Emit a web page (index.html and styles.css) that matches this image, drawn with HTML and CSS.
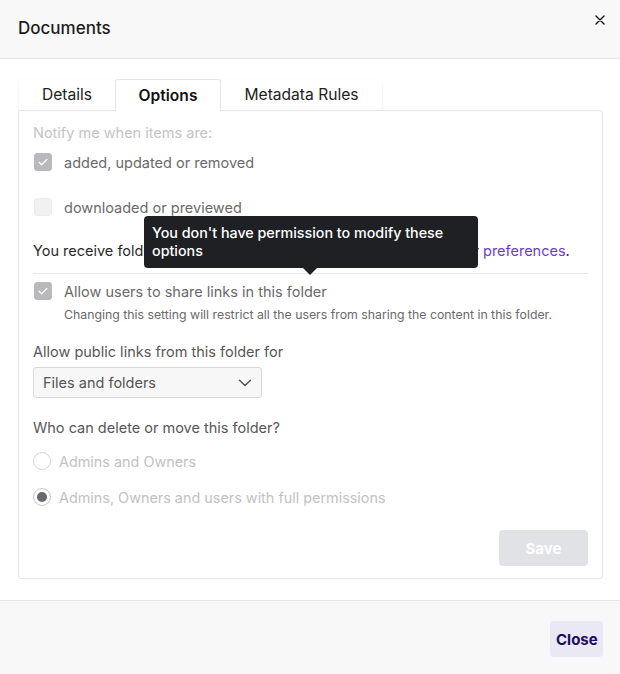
FILE: index.html
```html
<!DOCTYPE html>
<html>
<head>
<meta charset="utf-8">
<link rel="stylesheet" href="styles.css">
</head>
<body>
<div class="dialog">
  <header class="header">
    <h1 class="title">Documents</h1>
    <button class="x-btn" aria-label="Close">
      <svg width="10" height="10" viewBox="0 0 10 10"><path d="M1 1L9 9M9 1L1 9" stroke="#111" stroke-width="1.4" stroke-linecap="round"/></svg>
    </button>
  </header>
  <main class="body">
    <div class="tabs">
      <div class="tab">Details</div>
      <div class="tab active">Options</div>
      <div class="tab">Metadata Rules</div>
    </div>
    <section class="panel">
      <div class="faint-label">Notify me when items are:</div>
      <div class="check-row r1">
        <span class="cb checked"><svg width="12" height="10" viewBox="0 0 12 10"><path d="M2 5.2L4.6 7.8L10 2.4" fill="none" stroke="#fff" stroke-width="1.3" stroke-linecap="round" stroke-linejoin="round"/></svg></span>
        <span class="cb-label">added, updated or removed</span>
      </div>
      <div class="check-row r2">
        <span class="cb"></span>
        <span class="cb-label">downloaded or previewed</span>
      </div>
      <p class="receive">You receive folder notifications according to your settings in your <a class="link">preferences</a>.</p>
      <hr class="divider">
      <div class="check-row r3">
        <span class="cb checked"><svg width="12" height="10" viewBox="0 0 12 10"><path d="M2 5.2L4.6 7.8L10 2.4" fill="none" stroke="#fff" stroke-width="1.3" stroke-linecap="round" stroke-linejoin="round"/></svg></span>
        <span class="cb-label">Allow users to share links in this folder</span>
      </div>
      <p class="hint">Changing this setting will restrict all the users from sharing the content in this folder.</p>
      <div class="field-label public">Allow public links from this folder for</div>
      <div class="select">
        <span>Files and folders</span>
        <svg width="14" height="8" viewBox="0 0 14 8"><path d="M1.5 1.2L7 6.5L12.5 1.2" fill="none" stroke="#555" stroke-width="1.5" stroke-linecap="round" stroke-linejoin="round"/></svg>
      </div>
      <div class="field-label who">Who can delete or move this folder?</div>
      <div class="radio-row rr1">
        <span class="radio"></span>
        <span class="radio-label">Admins and Owners</span>
      </div>
      <div class="radio-row rr2">
        <span class="radio on"><span class="dot"></span></span>
        <span class="radio-label">Admins, Owners and users with full permissions</span>
      </div>
      <div class="actions">
        <button class="save">Save</button>
      </div>
    </section>
    <div class="tooltip">You don't have permission to modify these options<span class="arrow"></span></div>
  </main>
  <footer class="footer">
    <button class="close">Close</button>
  </footer>
</div>
</body>
</html>
```

FILE: styles.css
```css
* { box-sizing: border-box; }
html, body { margin: 0; padding: 0; }
body {
  width: 620px;
  height: 674px;
  font-family: Inter, "Noto Sans", "Liberation Sans", sans-serif;
  color: #222;
  background: #fff;
  overflow: hidden;
}
.dialog { display: flex; flex-direction: column; height: 674px; }
.header {
  height: 59px;
  background: #f8f8f8;
  border-bottom: 1px solid #e6e6e6;
  display: flex;
  align-items: flex-start;
  justify-content: space-between;
  padding: 0 15px 0 18px;
}
.title {
  margin: 0;
  font-size: 17px;
  font-weight: 500;
  line-height: 20px;
  padding-top: 18px;
  color: #1d1d1f;
}
.x-btn {
  border: 0;
  background: none;
  padding: 0;
  margin-top: 15px;
  width: 10px;
  height: 10px;
  display: flex;
}
.body {
  position: relative;
  flex: 1;
  padding: 21px 17px 0 18px;
}
.tabs {
  display: flex;
  height: 30px;
  padding-left: 1px;
}
.tab {
  height: 30px;
  line-height: 30px;
  font-size: 15.6px;
  color: #222;
  text-align: center;
  background: #fff;
  box-shadow: 0 1px 3px rgba(0,0,0,0.10);
  border-radius: 3px 3px 0 0;
}
.tab:nth-child(1) { width: 96px; }
.tab:nth-child(3) { width: 161px; border-radius: 3px 3px 3px 0; }
.tab.active {
  width: 106px;
  height: 32px;
  margin-top: -1px;
  font-weight: 600;
  color: #111;
  border: 1px solid #e6e6e6;
  border-bottom: 0;
  box-shadow: none;
  position: relative;
  z-index: 2;
  line-height: 31px;
}
.panel {
  border: 1px solid #e6e6e6;
  border-radius: 0 3px 3px 3px;
  padding: 11px 14px 12px 14px;
  height: 469px;
  position: relative;
  z-index: 1;
  background: #fff;
}
.faint-label {
  font-size: 14.5px;
  line-height: 22px;
  color: #c4c4c4;
}
.check-row {
  display: flex;
  align-items: center;
  height: 18px;
  padding-left: 1px;
}
.r1 { margin-top: 9px; }
.r2 { margin-top: 27px; }
.r3 { margin-top: 8px; }
.cb {
  width: 18px;
  height: 18px;
  border-radius: 3px;
  background: #f1f1f1;
  border: 1px solid #ececec;
  display: flex;
  align-items: center;
  justify-content: center;
  flex: none;
}
.cb.checked { background: #b9b9bd; border-color: #b9b9bd; }
.cb-label {
  margin-left: 12px;
  font-size: 14.5px;
  color: #6a6a6a;
}
.receive {
  margin: 25px 0 0;
  font-size: 14.5px;
  line-height: 20px;
  color: #2a2a2a;
  white-space: nowrap;
}
.link { color: #6c3bd6; }
.divider {
  border: 0;
  border-top: 1px solid #e8e8e8;
  margin: 12px 0 0;
  height: 0;
}
.hint {
  margin: 7px 0 0 31px;
  font-size: 12.3px;
  line-height: 16px;
  color: #6a6a6a;
  white-space: nowrap;
}
.field-label {
  font-size: 14.5px;
  line-height: 20px;
  color: #575757;
}
.public { margin-top: 19px; }
.who { margin-top: 20px; }
.select {
  margin-top: 5px;
  width: 229px;
  height: 31px;
  border: 1px solid #d9d9d9;
  border-radius: 3px;
  background: #f7f7f7;
  display: flex;
  align-items: center;
  justify-content: space-between;
  padding: 0 9px 0 9px;
  font-size: 14.5px;
  color: #555;
}
.radio-row {
  display: flex;
  align-items: center;
  height: 18px;
}
.rr1 { margin-top: 14px; }
.rr2 { margin-top: 18px; }
.radio {
  width: 18px;
  height: 18px;
  border-radius: 50%;
  border: 1px solid #d6d6d6;
  background: #fff;
  flex: none;
  display: flex;
  align-items: center;
  justify-content: center;
}
.radio.on { border-color: #c9c9c9; }
.dot {
  width: 10px;
  height: 10px;
  border-radius: 50%;
  background: #6a6a6e;
}
.radio-label {
  margin-left: 8px;
  font-size: 14.4px;
  color: #c2c2c2;
}
.actions {
  display: flex;
  justify-content: flex-end;
  margin-top: 24px;
}
.save {
  width: 89px;
  height: 36px;
  border: 0;
  border-radius: 4px;
  background: #e1e2e6;
  color: #fff;
  font-family: inherit;
  font-size: 15px;
  font-weight: 700;
}
.tooltip {
  position: absolute;
  left: 144px;
  top: 157px;
  width: 334px;
  height: 52px;
  padding: 8px 8px;
  background: #1f2023;
  border-radius: 4px;
  color: #fff;
  font-size: 14.3px;
  font-weight: 500;
  line-height: 18px;
  z-index: 5;
}
.arrow {
  position: absolute;
  left: 159px;
  bottom: -7px;
  width: 0;
  height: 0;
  border-left: 7px solid transparent;
  border-right: 7px solid transparent;
  border-top: 7px solid #1f2023;
}
.footer {
  height: 74px;
  border-top: 1px solid #e6e6e6;
  background: #f8f8f8;
  display: flex;
  justify-content: flex-end;
  align-items: flex-start;
  padding: 20px 17px 0 0;
}
.close {
  width: 53px;
  height: 36px;
  border: 0;
  border-radius: 4px;
  background: #ebe8f6;
  color: #1b0f5c;
  font-family: inherit;
  font-size: 15px;
  font-weight: 700;
}
```
